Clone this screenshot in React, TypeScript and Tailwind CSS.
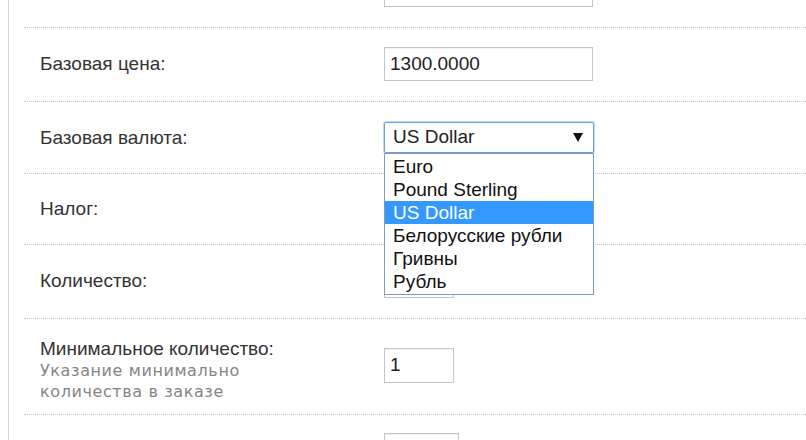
import React from 'react';

const currencies = ['Euro', 'Pound Sterling', 'US Dollar', 'Белорусские рубли', 'Гривны', 'Рубль'];

const rowCls = 'flex items-center border-b border-dotted border-[#c4c4c4] pl-4';
const labelCls = 'w-[344px] shrink-0 text-[19px] leading-[20px] text-[#333]';
const inputCls =
    'h-[34px] border border-[#c6c6c6] bg-white px-[5px] text-[19px] leading-[32px] text-[#222] shadow-[inset_0_1px_1px_rgba(0,0,0,0.06)]';

function Arrow() {
    return (
        <svg width="10" height="9" viewBox="0 0 10 9" className="shrink-0">
            <path d="M0 0 H10 L5 9 Z" fill="#111" />
        </svg>
    );
}

export default function App() {
    return (
        <div className="h-[440px] w-[806px] overflow-hidden bg-white pl-2 font-['Liberation_Sans',Arial,sans-serif]">
            <div className="flex h-full flex-col border-l border-[#d6d6d6] pl-[15px]">
                {/* row cut off at the top */}
                <div className={`${rowCls} -mt-[47px] shrink-0 pt-5 pb-5`}>
                    <div className={labelCls}>&nbsp;</div>
                    <div className={`${inputCls} w-[209px]`} />
                </div>

                {/* Base price */}
                <div className={`${rowCls} shrink-0 pt-[19px] pb-5`}>
                    <div className={labelCls}>Базовая цена:</div>
                    <div className={`${inputCls} w-[209px]`}>1300.0000</div>
                </div>

                {/* Base currency (open select) */}
                <div className={`${rowCls} relative z-10 shrink-0 py-5`}>
                    <div className={labelCls}>Базовая валюта:</div>
                    <div className="relative">
                        <div className="flex h-[31px] w-[210px] items-center justify-between rounded-[2px] border border-[#6f9fdc] bg-white pl-[8px] pr-[10px] text-[19px] text-[#222] shadow-[0_0_0_1px_rgba(120,170,235,0.45)]">
                            <span>US Dollar</span>
                            <Arrow />
                        </div>
                        <ul className="absolute left-0 top-full w-[210px] border border-[#7f9db9] bg-white py-px text-[19px] text-[#111]">
                            {currencies.map((c) => (
                                <li
                                    key={c}
                                    className={`h-[23px] pl-[8px] leading-[23px] ${c === 'US Dollar' ? 'bg-[#3399ff] text-white' : ''}`}
                                >
                                    {c}
                                </li>
                            ))}
                        </ul>
                    </div>
                </div>

                {/* Tax */}
                <div className={`${rowCls} shrink-0 py-5`}>
                    <div className={labelCls}>Налог:</div>
                    <div className="h-[30px] w-[210px] border border-[#c6c6c6]" />
                </div>

                {/* Quantity */}
                <div className={`${rowCls} shrink-0 pt-[19px] pb-5`}>
                    <div className={labelCls}>Количество:</div>
                    <div className={`${inputCls} w-[70px]`} />
                </div>

                {/* Minimum quantity */}
                <div className={`${rowCls} shrink-0 items-start pt-5 pb-3`}>
                    <div className={labelCls}>
                        <div>Минимальное количество:</div>
                        <div className="mt-px font-['DejaVu_Sans',Verdana,sans-serif] text-[16px] leading-[21px] tracking-[0.6px] text-[#858585]">
                            Указание минимально
                            <br />
                            количества в заказе
                        </div>
                    </div>
                    <div className={`${inputCls} mt-[9px] h-[35px] w-[70px]`}>1</div>
                </div>

                {/* next row, cut off at the bottom */}
                <div className={`${rowCls} shrink-0 pt-[18px]`}>
                    <div className={labelCls}>&nbsp;</div>
                    <div className={`${inputCls} w-[75px]`} />
                </div>
            </div>
        </div>
    );
}
